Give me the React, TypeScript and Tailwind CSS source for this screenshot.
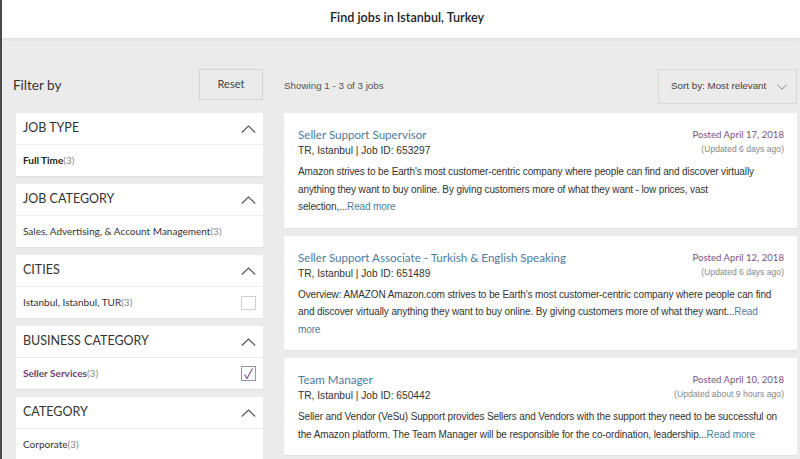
import React from "react";

const ember = { fontFamily: "Lato, 'Open Sans', sans-serif" };
const arial = { fontFamily: "'Liberation Sans', Arial, sans-serif" };

const ChevronUp = () => (
    <svg width="15" height="8" viewBox="0 0 15 8" className="text-[#555]">
        <polyline points="0.8,7.5 7.5,1 14.2,7.5" fill="none" stroke="currentColor" strokeWidth="1.1" />
    </svg>
);

const ChevronDown = () => (
    <svg width="10" height="6" viewBox="0 0 10 6" className="text-[#888]">
        <polyline points="0.5,0.8 5,5.2 9.5,0.8" fill="none" stroke="currentColor" strokeWidth="1" />
    </svg>
);

interface FilterProps {
    title: string;
    item: string;
    count: number;
    box?: "empty" | "checked";
    tone?: "bold" | "selected";
}

const Filter: React.FunctionComponent<FilterProps> = ({ title, item, count, box, tone }) => {
    const itemClass =
        tone === "selected" ? "text-[#6b3f74] font-bold" : tone === "bold" ? "text-[#222] font-bold" : "text-[#333]";
    return (
        <div className="bg-white shadow-[0_1px_1px_rgba(0,0,0,0.04)]">
            <div className="h-[32px] flex items-center justify-between pl-[7px] pr-[7px] border-b border-[#ededed]">
                <span className="text-[12.5px] text-[#333] uppercase" style={ember}>{title}</span>
                <ChevronUp />
            </div>
            <div className="h-[31px] flex items-center justify-between pl-[7px] pr-[7px]" style={ember}>
                <span className="text-[10px]">
                    <span className={itemClass}>{item}</span>
                    <span className="text-[#888]">({count})</span>
                </span>
                {box === "empty" && <span className="w-[15px] h-[14px] border border-[#d0d0d0] bg-white" />}
                {box === "checked" && (
                    <span className="w-[15px] h-[15px] border border-[#a08ea6] bg-white flex items-center justify-center">
                        <svg width="11" height="12" viewBox="0 0 11 12">
                            <polyline points="1.5,6.5 4,10.5 9.5,0.5" fill="none" stroke="#7a4a86" strokeWidth="1.1" />
                        </svg>
                    </span>
                )}
            </div>
        </div>
    );
};

interface JobProps {
    title: string;
    id: string;
    posted: string;
    updated: string;
    desc: string;
}

const Job: React.FunctionComponent<JobProps> = ({ title, id, posted, updated, desc }) => {
    return (
        <div className="bg-white pl-[14px] pr-[13px] pt-[14px] pb-[12px] shadow-[0_1px_1px_rgba(0,0,0,0.04)]">
            <div className="flex justify-between">
                <div>
                    <div className="text-[11.6px] leading-[16px] text-[#4b7c9e]" style={ember}>{title}</div>
                    <div className="text-[10.2px] leading-[16px] text-[#333]" style={arial}>TR, Istanbul | Job ID: {id}</div>
                </div>
                <div className="text-right pt-[1px]">
                    <div className="text-[9.6px] leading-[14px] text-[#7d5287]" style={ember}>{posted}</div>
                    <div className="text-[8.6px] leading-[14px] text-[#888]" style={arial}>{updated}</div>
                </div>
            </div>
            <p className="mt-[4px] pr-[2px] text-[10px] tracking-[-0.12px] leading-[17.5px] text-[#333]" style={arial}>
                {desc}<span className="text-[#4b7c9e]">Read more</span>
            </p>
        </div>
    );
};

const App: React.FunctionComponent = () => {
    return (
        <div className="w-[800px] h-[459px] overflow-hidden bg-[#ebebeb] border-l-2 border-[#4a4a4a]">
            <header className="h-[38px] bg-white flex items-center justify-center pl-[12px] shadow-[0_1px_3px_rgba(0,0,0,0.07)]">
                <h1 className="text-[12.6px] font-semibold text-[#222] -mt-[2px]" style={ember}>Find jobs in Istanbul, Turkey</h1>
            </header>
            <div className="flex gap-[21px] pl-[14px] pt-[31px]">
                <aside className="w-[247px] flex flex-col">
                    <div className="flex items-center justify-between h-[31px]">
                        <span className="text-[13.5px] text-[#333] -ml-[3px] mt-[1px]" style={ember}>Filter by</span>
                        <button className="w-[64px] h-[31px] border border-[#d4d4d4] text-[11px] text-[#444]" style={ember}>Reset</button>
                    </div>
                    <div className="mt-[13px] flex flex-col gap-[8px]">
                        <Filter title="Job Type" item="Full Time" count={3} tone="bold" />
                        <Filter title="Job Category" item="Sales, Advertising, & Account Management" count={3} />
                        <Filter title="Cities" item="Istanbul, Istanbul, TUR" count={3} box="empty" />
                        <Filter title="Business Category" item="Seller Services" count={3} box="checked" tone="selected" />
                        <Filter title="Category" item="Corporate" count={3} />
                    </div>
                </aside>
                <main className="w-[513px] flex flex-col">
                    <div className="flex items-center justify-between h-[35px]">
                        <span className="text-[9.8px] text-[#555]" style={arial}>Showing 1 - 3 of 3 jobs</span>
                        <div className="w-[139px] h-[35px] border border-[#d8d8d8] flex items-center justify-between pl-[12px] pr-[9px]">
                            <span className="text-[9.8px] text-[#444]" style={arial}>Sort by: Most relevant</span>
                            <ChevronDown />
                        </div>
                    </div>
                    <div className="mt-[9px] flex flex-col gap-[8px]">
                        <Job
                            title="Seller Support Supervisor"
                            id="653297"
                            posted="Posted April 17, 2018"
                            updated="(Updated 6 days ago)"
                            desc="Amazon strives to be Earth's most customer-centric company where people can find and discover virtually anything they want to buy online. By giving customers more of what they want - low prices, vast selection,..."
                        />
                        <Job
                            title="Seller Support Associate - Turkish & English Speaking"
                            id="651489"
                            posted="Posted April 12, 2018"
                            updated="(Updated 6 days ago)"
                            desc="Overview: AMAZON Amazon.com strives to be Earth's most customer-centric company where people can find and discover virtually anything they want to buy online. By giving customers more of what they want..."
                        />
                        <Job
                            title="Team Manager"
                            id="650442"
                            posted="Posted April 10, 2018"
                            updated="(Updated about 9 hours ago)"
                            desc="Seller and Vendor (VeSu) Support provides Sellers and Vendors with the support they need to be successful on the Amazon platform. The Team Manager will be responsible for the co-ordination, leadership..."
                        />
                    </div>
                </main>
            </div>
        </div>
    );
};

export default App;
